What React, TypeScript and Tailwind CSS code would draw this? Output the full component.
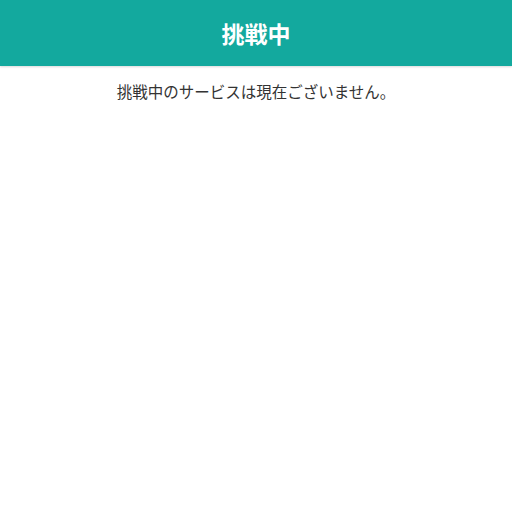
import React from "react";

const App = () => {
  return (
    <div
      className="min-h-screen bg-white"
      style={{ fontFamily: '"Noto Sans CJK JP", "Noto Sans", sans-serif' }}
    >
      {/* Header */}
      <header className="h-[66px] bg-[#13a99e] flex items-center justify-center shadow-[0_1px_2px_rgba(0,0,0,0.15)]">
        <h1 className="text-[23px] font-bold text-white leading-none">挑戦中</h1>
      </header>

      {/* Empty message */}
      <p className="mt-[14px] text-center text-[15.5px] text-[#333333] leading-[22px]">
        挑戦中のサービスは現在ございません。
      </p>
    </div>
  );
};

export default App;
